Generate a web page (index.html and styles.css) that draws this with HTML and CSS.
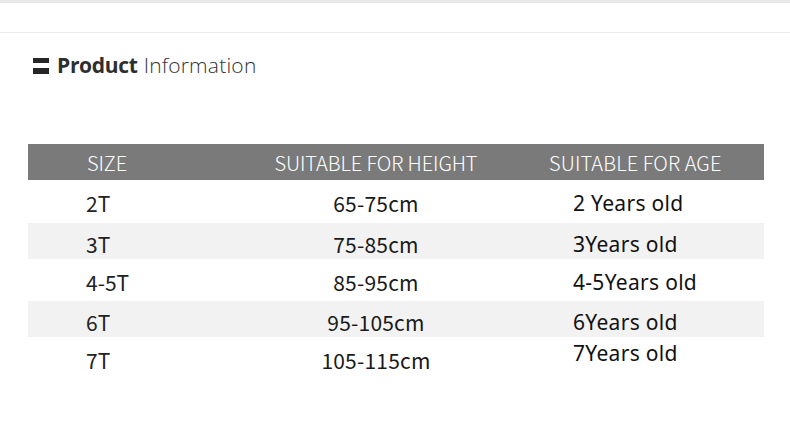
FILE: index.html
```html
<!DOCTYPE html>
<html>
<head>
<meta charset="utf-8">
<link rel="stylesheet" href="styles.css">
</head>
<body>
<div class="topbar"></div>
<div class="divider"></div>
<div class="title">
  <span class="icon"><span class="bar"></span><span class="bar"></span></span>
  <span class="bold">Product</span><span class="light">Information</span>
</div>
<div class="table">
  <div class="row head">
    <div class="c1">SIZE</div>
    <div class="c2">SUITABLE FOR HEIGHT</div>
    <div class="c3">SUITABLE FOR AGE</div>
  </div>
  <div class="row tall first">
    <div class="c1">2T</div>
    <div class="c2">65-75cm</div>
    <div class="c3">2 Years old</div>
  </div>
  <div class="row short stripe">
    <div class="c1">3T</div>
    <div class="c2">75-85cm</div>
    <div class="c3">3Years old</div>
  </div>
  <div class="row tall">
    <div class="c1">4-5T</div>
    <div class="c2">85-95cm</div>
    <div class="c3">4-5Years old</div>
  </div>
  <div class="row short stripe">
    <div class="c1">6T</div>
    <div class="c2">95-105cm</div>
    <div class="c3">6Years old</div>
  </div>
  <div class="row tall">
    <div class="c1">7T</div>
    <div class="c2">105-115cm</div>
    <div class="c3 up">7Years old</div>
  </div>
</div>
</body>
</html>
```

FILE: styles.css
```css
html, body {
  margin: 0;
  padding: 0;
  background: #ffffff;
}
body {
  width: 790px;
  height: 431px;
  overflow: hidden;
  font-family: "Noto Sans", "Noto Sans CJK SC", sans-serif;
}
.topbar {
  height: 3px;
  background: #e8e8e8;
}
.divider {
  margin-top: 29px;
  height: 1px;
  background: #ededed;
}
.title {
  display: flex;
  align-items: center;
  margin-top: 18px;
  padding-left: 33px;
  height: 28px;
  font-family: "Open Sans", sans-serif;
  font-size: 21px;
  color: #2e2e2e;
}
.icon {
  display: flex;
  flex-direction: column;
  gap: 5px;
  width: 16px;
  margin-right: 8px;
  margin-top: 2px;
}
.bar {
  display: block;
  height: 6px;
  background: #262626;
}
.bar:first-child {
  height: 5px;
}
.bold {
  font-weight: 700;
  letter-spacing: -0.3px;
  margin-right: 6px;
}
.light {
  font-weight: 300;
  color: #333333;
  letter-spacing: 0.2px;
}
.table {
  margin-top: 65px;
  margin-left: 28px;
  width: 736px;
}
.row {
  display: grid;
  grid-template-columns: 200px 296px 240px;
  align-items: center;
  color: #1a1a1a;
}
.row.head {
  height: 36px;
  background: #7a7a7a;
  color: #ffffff;
}
.row.tall {
  height: 42px;
  padding-top: 3px;
  box-sizing: border-box;
}
.row.tall.first {
  height: 43px;
}
.row.short {
  height: 36px;
  padding-top: 5px;
  box-sizing: border-box;
}
.stripe {
  background: #f2f2f2;
}
.c1 {
  padding-left: 58px;
  font-family: "Noto Sans CJK SC", "Noto Sans", sans-serif;
  font-size: 21px;
  color: #222222;
}
.c2 {
  text-align: center;
  font-family: "Noto Sans CJK SC", "Noto Sans", sans-serif;
  font-size: 21px;
  letter-spacing: 0.2px;
}
.c3 {
  padding-left: 49px;
  font-family: "Noto Sans", sans-serif;
  font-size: 21px;
  font-weight: 400;
  letter-spacing: 0.3px;
  color: #111111;
}
.head .c1, .head .c2, .head .c3 {
  font-family: "Noto Sans CJK SC", "Noto Sans", sans-serif;
  font-weight: 300;
  font-size: 20px;
  color: #ffffff;
  letter-spacing: -0.1px;
}
.head .c1 { padding-left: 59px; }
.head .c2 { text-align: center; }
.head .c3 { padding-left: 25px; letter-spacing: 0.1px; }
.c3.up {
  margin-top: -14px;
}
```
